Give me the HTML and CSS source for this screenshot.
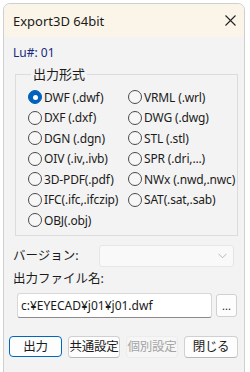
FILE: index.html
```html
<!DOCTYPE html>
<html lang="ja">
<head>
<meta charset="utf-8">
<link rel="stylesheet" href="styles.css">
</head>
<body>
<div class="window">
  <div class="titlebar">
    <span class="title">Export3D 64bit</span>
    <svg class="close" width="11" height="11" viewBox="0 0 11 11"><path d="M0.5 0.5 L10.5 10.5 M10.5 0.5 L0.5 10.5" stroke="#222" stroke-width="1.1" fill="none"/></svg>
  </div>
  <div class="content">
    <div class="lu">Lu#: 01</div>
    <fieldset class="group">
      <legend>出力形式</legend>
      <div class="radios">
        <label class="radio checked"><span class="dot"></span>DWF (.dwf)</label>
        <label class="radio"><span class="dot"></span>VRML (.wrl)</label>
        <label class="radio"><span class="dot"></span>DXF (.dxf)</label>
        <label class="radio"><span class="dot"></span>DWG (.dwg)</label>
        <label class="radio"><span class="dot"></span>DGN (.dgn)</label>
        <label class="radio"><span class="dot"></span>STL (.stl)</label>
        <label class="radio"><span class="dot"></span>OIV (.iv,.ivb)</label>
        <label class="radio"><span class="dot"></span>SPR (.dri,...)</label>
        <label class="radio"><span class="dot"></span>3D-PDF(.pdf)</label>
        <label class="radio"><span class="dot"></span>NWx (.nwd,.nwc)</label>
        <label class="radio"><span class="dot"></span>IFC(.ifc,.ifczip)</label>
        <label class="radio"><span class="dot"></span>SAT(.sat,.sab)</label>
        <label class="radio"><span class="dot"></span>OBJ(.obj)</label>
      </div>
    </fieldset>
    <div class="version-row">
      <span class="label">バージョン:</span>
      <div class="combo">
        <svg width="9" height="6" viewBox="0 0 9 6"><path d="M0.5 0.8 L4.5 4.8 L8.5 0.8" stroke="#b8b8b8" stroke-width="1" fill="none"/></svg>
      </div>
    </div>
    <div class="label file-label">出力ファイル名:</div>
    <div class="file-row">
      <div class="input">c:¥EYECAD¥j01¥j01.dwf</div>
      <div class="browse">...</div>
    </div>
    <div class="buttons">
      <div class="btn default">出力</div>
      <div class="btn mid">共通設定</div>
      <div class="btn mid disabled">個別設定</div>
      <div class="btn wide">閉じる</div>
    </div>
  </div>
</div>
</body>
</html>
```

FILE: styles.css
```css
html, body {
  margin: 0;
  padding: 0;
  background: #ffffff;
}
body {
  font-family: "Noto Sans", "Noto Sans CJK JP", sans-serif;
  font-size: 12px;
  color: #1b1b1b;
  overflow: hidden;
  width: 250px;
  height: 372px;
}
.window {
  margin: 3px 5px 0 3px;
  height: 380px;
  border: 1px solid #cfcfcf;
  border-radius: 7px 7px 0 0;
  overflow: hidden;
  background: #f3f3f3;
}
.titlebar {
  height: 33px;
  background: #faf5e8;
  display: flex;
  align-items: center;
  justify-content: space-between;
  padding: 0 8px 0 9px;
}
.title {
  font-size: 13px;
  line-height: 16px;
}
.close {
  display: block;
}
.content {
  padding: 0 6px 0 11px;
}
.lu {
  margin: 8px 0 0 -2px;
  line-height: 15px;
  font-size: 12px;
  color: #16297a;
}
.group {
  margin: 7px 0 0 0;
  padding: 5px 0 4px 12px;
  border: 1px solid #dcdcdc;
  min-width: 0;
}
.group legend {
  margin-left: 3px;
  padding: 0 2px;
  font-size: 13px;
  line-height: 15px;
}
.radios {
  display: grid;
  grid-template-columns: 100px 1fr;
  grid-auto-rows: 20.5px;
}
.radio {
  display: flex;
  align-items: center;
  font-size: 12px;
  white-space: nowrap;
  letter-spacing: -0.15px;
}
.dot {
  width: 12px;
  height: 12px;
  border: 1px solid #4a4a4a;
  border-radius: 50%;
  background: #f7f7f7;
  margin-right: 2px;
  flex: none;
}
.radio.checked .dot {
  background: #0062bd;
  border-color: #0062bd;
  position: relative;
}
.radio.checked .dot::after {
  content: "";
  position: absolute;
  left: 3.5px;
  top: 3.5px;
  width: 5px;
  height: 5px;
  border-radius: 50%;
  background: #fff;
}
.version-row {
  display: flex;
  align-items: center;
  margin-top: 9px;
  margin-left: -2px;
}
.label {
  font-size: 12.5px;
  line-height: 16px;
}
.version-row .label {
  width: 86px;
}
.combo {
  width: 127px;
  height: 20px;
  border: 1px solid #e6e6e6;
  border-radius: 3px;
  background: #f9f9f9;
  display: flex;
  align-items: center;
  justify-content: flex-end;
  padding-right: 6px;
  box-sizing: content-box;
}
.file-label {
  margin-top: 4px;
  margin-left: -2px;
}
.file-row {
  display: flex;
  align-items: center;
  gap: 4px;
  margin-top: 6px;
  margin-left: 2px;
}
.input {
  width: 190px;
  height: 23px;
  border: 1px solid #d8d8d8;
  border-bottom: 1px solid #8a8a8a;
  background: #ffffff;
  border-radius: 3px;
  padding-left: 3px;
  line-height: 23px;
  font-size: 12px;
}
.browse {
  width: 19px;
  height: 21px;
  border: 1px solid #d0d0d0;
  border-radius: 3px;
  background: #fdfdfd;
  text-align: center;
  font-size: 11px;
  line-height: 22px;
}
.buttons {
  display: flex;
  gap: 5px;
  margin-top: 18px;
  margin-left: -6px;
}
.btn {
  height: 20px;
  border: 1px solid #d0d0d0;
  border-bottom-color: #b8b8b8;
  border-radius: 4px;
  background: #fdfdfd;
  font-size: 12.5px;
  line-height: 20px;
  letter-spacing: -0.3px;
  white-space: nowrap;
  text-align: center;
  box-sizing: content-box;
  overflow: hidden;
}
.btn.mid {
  width: 51px;
  margin-left: 1px;
}
.btn.wide {
  width: 53px;
  margin-left: 1px;
}
.btn.default {
  border: 1.5px solid #0067c0;
  width: 52px;
  height: 19px;
  line-height: 19px;
}
.btn.disabled {
  color: #a4a4a4;
  border-color: #ececec;
  background: #f6f6f6;
}
```
